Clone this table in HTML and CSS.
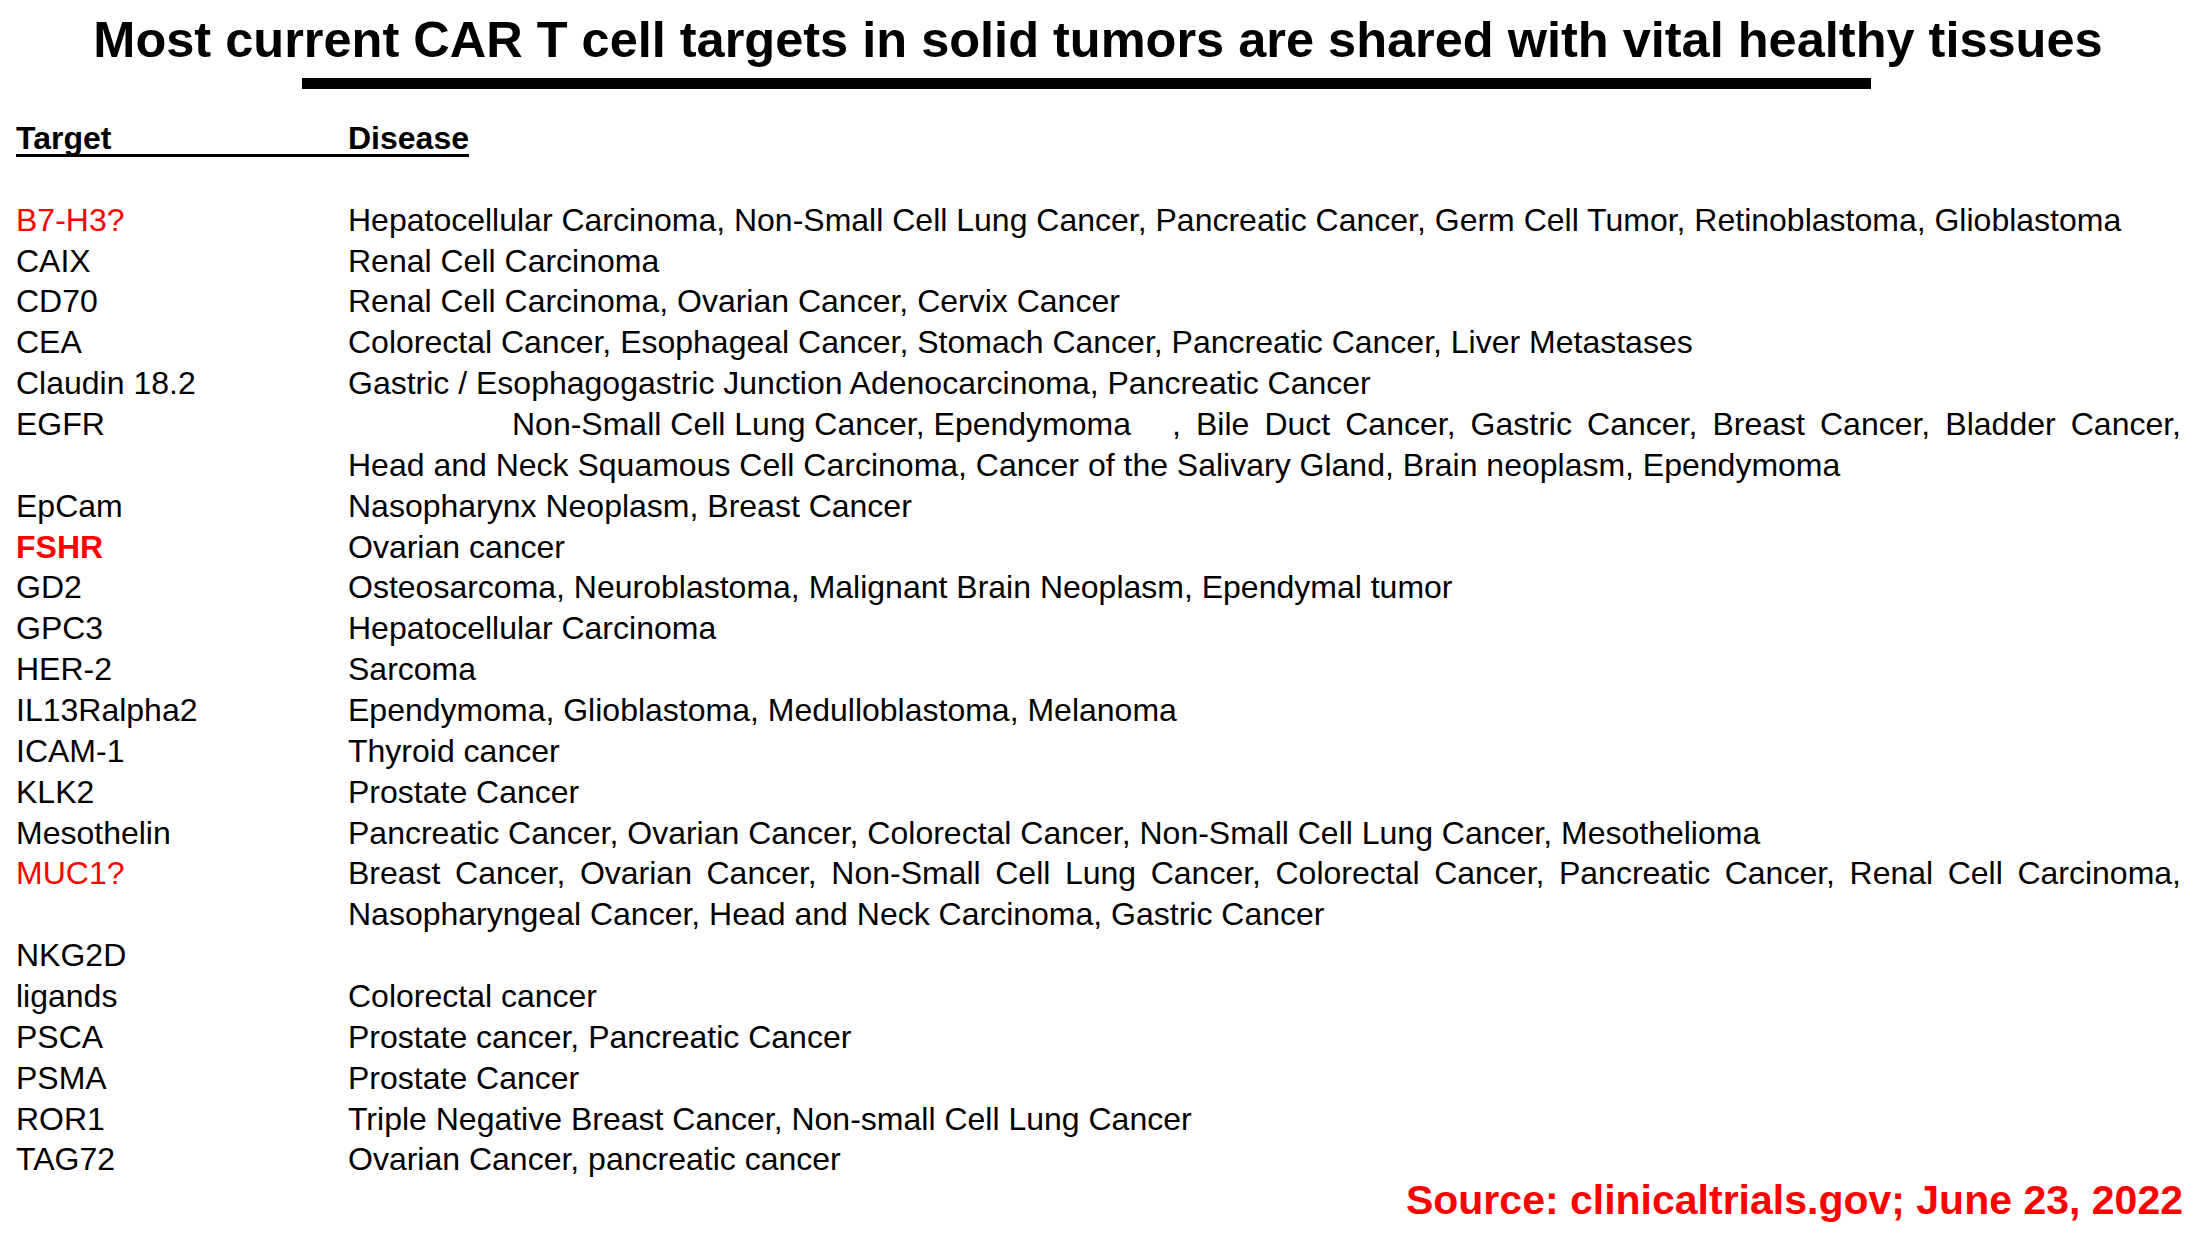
FILE: index.html
```html
<!DOCTYPE html>
<html lang="en">
<head>
<meta charset="utf-8">
<title>CAR T cell targets</title>
<link rel="stylesheet" href="styles.css">
</head>
<body>
<div class="slide">
  <h1 class="title">Most current CAR T cell targets in solid tumors are shared with vital healthy tissues</h1>
  <div class="title-bar"></div>

  <div class="hdr"><span class="hdr-u"><span class="hdr-t">Target</span>Disease</span></div>
  <div class="spacer-row"></div>

  <div class="table">
    <div class="tg red">B7-H3?</div><div class="ds">Hepatocellular Carcinoma, Non-Small Cell Lung Cancer, Pancreatic Cancer, Germ Cell Tumor, Retinoblastoma, Glioblastoma</div>
    <div class="tg">CAIX</div><div class="ds">Renal Cell Carcinoma</div>
    <div class="tg">CD70</div><div class="ds">Renal Cell Carcinoma, Ovarian Cancer, Cervix Cancer</div>
    <div class="tg">CEA</div><div class="ds">Colorectal Cancer, Esophageal Cancer, Stomach Cancer, Pancreatic Cancer, Liver Metastases</div>
    <div class="tg">Claudin 18.2</div><div class="ds">Gastric / Esophagogastric Junction Adenocarcinoma, Pancreatic Cancer</div>
    <div class="tg">EGFR</div><div class="ds"><div class="egfr-line"><span class="egfr-a">Non-Small Cell Lung Cancer, Ependymoma</span><span class="egfr-b">, Bile Duct Cancer, Gastric Cancer, Breast Cancer, Bladder Cancer,</span></div><div>Head and Neck Squamous Cell Carcinoma, Cancer of the Salivary Gland, Brain neoplasm, Ependymoma</div></div>
    <div class="tg">EpCam</div><div class="ds">Nasopharynx Neoplasm, Breast Cancer</div>
    <div class="tg red bold">FSHR</div><div class="ds">Ovarian cancer</div>
    <div class="tg">GD2</div><div class="ds">Osteosarcoma, Neuroblastoma, Malignant Brain Neoplasm, Ependymal tumor</div>
    <div class="tg">GPC3</div><div class="ds">Hepatocellular Carcinoma</div>
    <div class="tg">HER-2</div><div class="ds">Sarcoma</div>
    <div class="tg">IL13Ralpha2</div><div class="ds">Ependymoma, Glioblastoma, Medulloblastoma, Melanoma</div>
    <div class="tg">ICAM-1</div><div class="ds">Thyroid cancer</div>
    <div class="tg">KLK2</div><div class="ds">Prostate Cancer</div>
    <div class="tg">Mesothelin</div><div class="ds">Pancreatic Cancer, Ovarian Cancer, Colorectal Cancer, Non-Small Cell Lung Cancer, Mesothelioma</div>
    <div class="tg red">MUC1?</div><div class="ds"><div class="jline">Breast Cancer, Ovarian Cancer, Non-Small Cell Lung Cancer, Colorectal Cancer, Pancreatic Cancer, Renal Cell Carcinoma,</div><div>Nasopharyngeal Cancer, Head and Neck Carcinoma, Gastric Cancer</div></div>
    <div class="tg">NKG2D</div><div class="ds"></div>
    <div class="tg">ligands</div><div class="ds">Colorectal cancer</div>
    <div class="tg">PSCA</div><div class="ds">Prostate cancer, Pancreatic Cancer</div>
    <div class="tg">PSMA</div><div class="ds">Prostate Cancer</div>
    <div class="tg">ROR1</div><div class="ds">Triple Negative Breast Cancer, Non-small Cell Lung Cancer</div>
    <div class="tg">TAG72</div><div class="ds">Ovarian Cancer, pancreatic cancer</div>
  </div>

  <div class="source">Source: clinicaltrials.gov; June 23, 2022</div>
</div>
</body>
</html>
```

FILE: styles.css
```css
html, body {
  margin: 0;
  padding: 0;
  background: #ffffff;
}

body {
  font-family: "Liberation Sans", Arial, sans-serif;
  color: #000000;
}

.slide {
  width: 2196px;
  height: 1233px;
  overflow: hidden;
}

.title {
  margin: 0;
  padding-top: 10px;
  font-size: 50.5px;
  line-height: 60px;
  font-weight: bold;
  text-align: center;
}

.title-bar {
  margin: 8px 0 0 302px;
  width: 1569px;
  height: 11px;
  background: #000000;
}

.hdr {
  margin-top: 29px;
  padding-left: 16px;
  font-size: 32px;
  line-height: 40.86px;
  font-weight: bold;
}

.hdr-u {
  display: inline-block;
  line-height: 32px;
  border-bottom: 3px solid #000000;
}

.hdr-t {
  display: inline-block;
  width: 332px;
}

.spacer-row {
  height: 40.86px;
}

.table {
  display: grid;
  grid-template-columns: 332px 1833px;
  padding-left: 16px;
  font-size: 32px;
  line-height: 40.86px;
}

.tg {
  white-space: nowrap;
}

.ds {
  white-space: nowrap;
}

.jline {
  text-align: justify;
  text-align-last: justify;
  white-space: normal;
}

.egfr-line {
  display: flex;
  padding-left: 164px;
  gap: 41px;
}

.egfr-a {
  white-space: nowrap;
}

.egfr-b {
  flex: 1;
  white-space: normal;
  text-align: justify;
  text-align-last: justify;
}

.red {
  color: #ff0000;
}

.bold {
  font-weight: bold;
}

.source {
  margin-top: 2px;
  padding-right: 13px;
  text-align: right;
  font-size: 41px;
  line-height: 36px;
  font-weight: bold;
  color: #ff0000;
}
```
